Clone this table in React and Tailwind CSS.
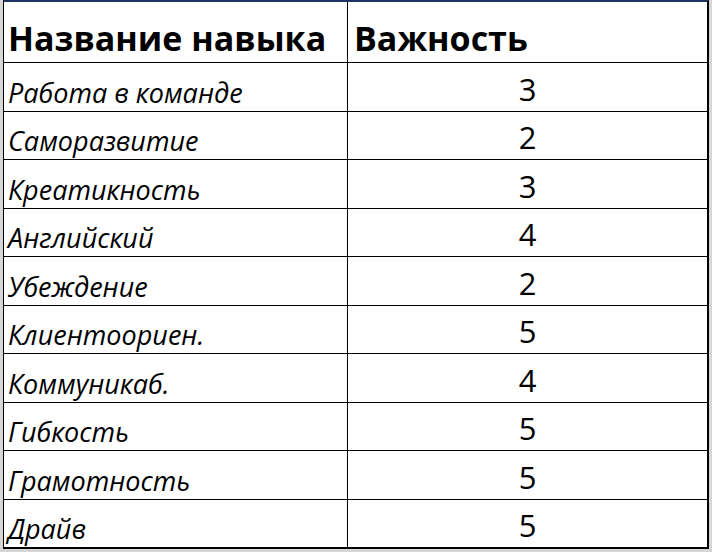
const skills = [
  { name: 'Работа в команде', value: 3 },
  { name: 'Саморазвитие', value: 2 },
  { name: 'Креатикность', value: 3 },
  { name: 'Английский', value: 4 },
  { name: 'Убеждение', value: 2 },
  { name: 'Клиентоориен.', value: 5 },
  { name: 'Коммуникаб.', value: 4 },
  { name: 'Гибкость', value: 5 },
  { name: 'Грамотность', value: 5 },
  { name: 'Драйв', value: 5 },
];

export default function App() {
  return (
    <div className="w-[712px] h-[552px] bg-[#d6d6d6] pl-[3px] pr-[3px] pb-[3px] font-['Open_Sans','Liberation_Sans',sans-serif] text-black">
      <div className="h-full bg-white border-t-2 border-t-[#1f3463] border-l border-r-2 border-b-2 border-black flex flex-col">
        <div className="h-[61px] flex border-b border-black">
          <div className="w-[344px] border-r border-black flex items-end pl-[4px] pb-[7px]">
            <span className="text-[34px] font-bold leading-none">Название навыка</span>
          </div>
          <div className="flex-1 flex items-end pl-[6px] pb-[7px]">
            <span className="text-[34px] font-bold leading-none">Важность</span>
          </div>
        </div>
        {skills.map((s, i) => (
          <div
            key={s.name}
            className={`flex-1 flex ${i < skills.length - 1 ? 'border-b border-black' : ''}`}
          >
            <div className="w-[344px] border-r border-black flex items-end pl-[4px] pb-[5px]">
              <span className="text-[27px] italic leading-none">{s.name}</span>
            </div>
            <div className="flex-1 flex items-end justify-center pb-[6px]">
              <span className="text-[31px] leading-none">{s.value}</span>
            </div>
          </div>
        ))}
      </div>
    </div>
  );
}
